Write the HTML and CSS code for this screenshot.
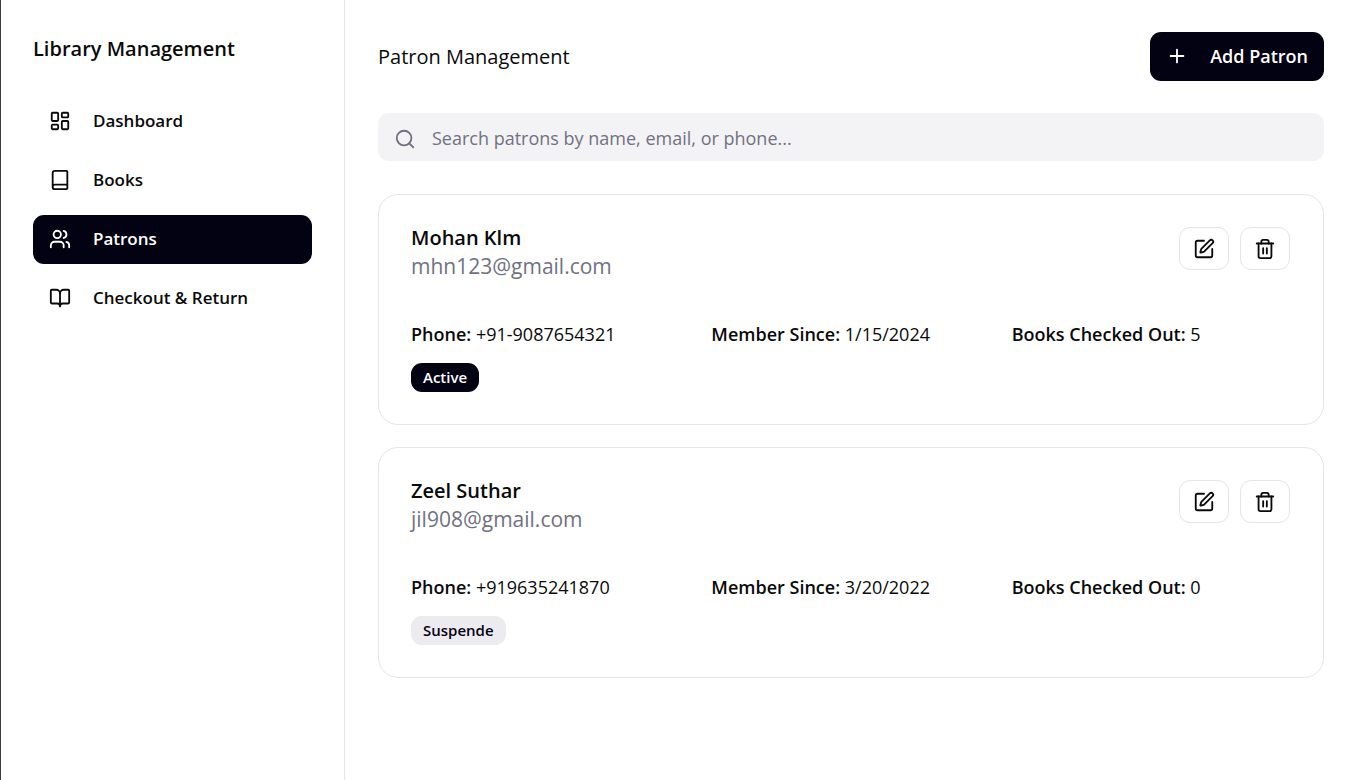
FILE: index.html
```html
<!DOCTYPE html>
<html lang="en">
<head>
<meta charset="utf-8">
<meta name="viewport" content="width=device-width, initial-scale=1">
<title>Library Management</title>
<link rel="stylesheet" href="styles.css">
</head>
<body>
<svg class="sprite" aria-hidden="true">
  <symbol id="edit" viewBox="0 0 24 24"><path d="M12 3H5a2 2 0 0 0-2 2v14a2 2 0 0 0 2 2h14a2 2 0 0 0 2-2v-7"/><path d="M18.375 2.625a1 1 0 0 1 3 3l-9.013 9.014a2 2 0 0 1-.853.505l-2.873.84a.5.5 0 0 1-.62-.62l.84-2.873a2 2 0 0 1 .506-.852z"/></symbol>
  <symbol id="trash" viewBox="0 0 24 24"><path d="M3 6h18"/><path d="M19 6v14a2 2 0 0 1-2 2H7a2 2 0 0 1-2-2V6"/><path d="M8 6V4a2 2 0 0 1 2-2h4a2 2 0 0 1 2 2v2"/><path d="M10 11v6"/><path d="M14 11v6"/></symbol>
</svg>
<div class="app">
  <aside class="sidebar">
    <h1 class="brand">Library Management</h1>
    <nav class="nav">
      <button type="button" class="nav-item">
        <svg class="icon" viewBox="0 0 24 24"><rect x="3" y="3" width="7" height="9" rx="1"/><rect x="14" y="3" width="7" height="5" rx="1"/><rect x="14" y="12" width="7" height="9" rx="1"/><rect x="3" y="16" width="7" height="5" rx="1"/></svg>
        <span>Dashboard</span>
      </button>
      <button type="button" class="nav-item">
        <svg class="icon" viewBox="0 0 24 24"><path d="M4 19.5v-15A2.5 2.5 0 0 1 6.500 2H19a1 1 0 0 1 1 1v18a1 1 0 0 1-1 1H6.500a1 1 0 0 1 0-5H20"/></svg>
        <span>Books</span>
      </button>
      <button type="button" class="nav-item active" aria-current="page">
        <svg class="icon" viewBox="0 0 24 24"><path d="M16 21v-2a4 4 0 0 0-4-4H6a4 4 0 0 0-4 4v2"/><circle cx="9" cy="7" r="4"/><path d="M22 21v-2a4 4 0 0 0-3-3.870"/><path d="M16 3.130a4 4 0 0 1 0 7.750"/></svg>
        <span>Patrons</span>
      </button>
      <button type="button" class="nav-item">
        <svg class="icon" viewBox="0 0 24 24"><path d="M12 7v14"/><path d="M3 18a1 1 0 0 1-1-1V4a1 1 0 0 1 1-1h5a4 4 0 0 1 4 4 4 4 0 0 1 4-4h5a1 1 0 0 1 1 1v13a1 1 0 0 1-1 1h-6a3 3 0 0 0-3 3 3 3 0 0 0-3-3z"/></svg>
        <span>Checkout &amp; Return</span>
      </button>
    </nav>
  </aside>
  <main class="main">
    <header class="page-head">
      <h2 class="page-title">Patron Management</h2>
      <button type="button" class="add">
        <svg class="icon" viewBox="0 0 24 24"><path d="M5 12h14"/><path d="M12 5v14"/></svg>
        <span>Add Patron</span>
      </button>
    </header>
    <label class="search">
      <svg class="icon" viewBox="0 0 24 24"><circle cx="11" cy="11" r="8"/><path d="m21 21-4.300-4.300"/></svg>
      <input type="search" aria-label="Search patrons" placeholder="Search patrons by name, email, or phone...">
    </label>
    <section class="cards">
      <article class="card">
        <div class="card-head">
          <div>
            <h3 class="name">Mohan Klm</h3>
            <p class="email">mhn123@gmail.com</p>
          </div>
          <div class="actions">
            <button type="button" class="action" aria-label="Edit Mohan Klm"><svg class="icon"><use href="#edit"/></svg></button>
            <button type="button" class="action" aria-label="Delete Mohan Klm"><svg class="icon"><use href="#trash"/></svg></button>
          </div>
        </div>
        <div class="details">
          <p><strong>Phone:</strong> +91-9087654321</p>
          <p><strong>Member Since:</strong> 1/15/2024</p>
          <p><strong>Books Checked Out:</strong> 5</p>
        </div>
        <span class="badge badge-active">Active</span>
      </article>
      <article class="card">
        <div class="card-head">
          <div>
            <h3 class="name">Zeel Suthar</h3>
            <p class="email">jil908@gmail.com</p>
          </div>
          <div class="actions">
            <button type="button" class="action" aria-label="Edit Zeel Suthar"><svg class="icon"><use href="#edit"/></svg></button>
            <button type="button" class="action" aria-label="Delete Zeel Suthar"><svg class="icon"><use href="#trash"/></svg></button>
          </div>
        </div>
        <div class="details">
          <p><strong>Phone:</strong> +919635241870</p>
          <p><strong>Member Since:</strong> 3/20/2022</p>
          <p><strong>Books Checked Out:</strong> 0</p>
        </div>
        <span class="badge">Suspende</span>
      </article>
    </section>
  </main>
</div>
</body>
</html>
```
FILE: styles.css
```css
* { box-sizing: border-box; }
body {
  margin: 0;
  background: #fff;
  color: #0a0a0a;
  font-family: "Segoe UI", "Open Sans", "Noto Sans", sans-serif;
  font-size: 18px;
  line-height: 28px;
}
h1, h2, h3, p { margin: 0; }
button, input { font: inherit; color: inherit; }
button { cursor: pointer; }
.sprite { display: none; }
.icon {
  flex: none;
  width: 22px;
  height: 22px;
  fill: none;
  stroke: currentColor;
  stroke-width: 2;
  stroke-linecap: round;
  stroke-linejoin: round;
}
.app {
  display: flex;
  min-height: 100vh;
  border-left: 1px solid #3c3c3c;
}
.sidebar {
  flex: none;
  width: 344px;
  padding: 32px;
  border-right: 1px solid #e5e5e5;
}
.brand {
  font-size: 20px;
  font-weight: 600;
  line-height: 34px;
}
.nav {
  display: flex;
  flex-direction: column;
  gap: 10px;
  margin-top: 31px;
}
.nav-item {
  display: flex;
  align-items: center;
  gap: 22px;
  height: 49px;
  padding: 0 16px 1px;
  border: 0;
  border-radius: 11px;
  background: none;
  font-size: 17px;
  font-weight: 600;
  text-align: left;
}
.nav-item.active, .add { background: #030213; color: #fff; }
.main {
  flex: 1;
  min-width: 0;
  padding: 32px 26px 32px 33px;
}
.page-head {
  display: flex;
  align-items: center;
  justify-content: space-between;
}
.page-title {
  font-size: 20px;
  font-weight: 400;
  line-height: 34px;
}
.add {
  display: flex;
  align-items: center;
  gap: 22px;
  height: 49px;
  padding: 0 16px 1px;
  border: 0;
  border-radius: 11px;
  font-weight: 600;
}
.search {
  display: flex;
  align-items: center;
  gap: 16px;
  height: 48px;
  margin-top: 32px;
  padding: 4px 16px 0;
  border-radius: 11px;
  background: #f3f3f5;
  color: #717182;
}
.search input {
  flex: 1;
  min-width: 0;
  padding: 0 0 2px;
  border: 0;
  outline: 0;
  background: none;
}
.search input::placeholder { color: #717182; opacity: 1; }
.cards {
  display: flex;
  flex-direction: column;
  gap: 22px;
  margin-top: 33px;
}
.card {
  padding: 32px 33px 32px 32px;
  border: 1px solid #e5e5e5;
  border-radius: 20px;
}
.card-head {
  display: flex;
  align-items: flex-start;
  justify-content: space-between;
}
.name {
  font-size: 20px;
  font-weight: 600;
  line-height: 22px;
}
.email {
  color: #717182;
  font-size: 21px;
  line-height: 34px;
}
.actions { display: flex; gap: 11px; }
.action {
  display: grid;
  place-items: center;
  width: 50px;
  height: 43px;
  padding: 0;
  border: 1px solid #e5e5e5;
  border-radius: 11px;
  background: #fff;
}
.details {
  display: grid;
  grid-template-columns: repeat(3, 1fr);
  gap: 22px;
  margin-top: 37px;
}
.details strong { font-weight: 600; }
.badge {
  display: block;
  width: fit-content;
  margin-top: 15px;
  padding: 3px 12px;
  border-radius: 11px;
  background: #ececf0;
  color: #030213;
  font-size: 15px;
  font-weight: 600;
  line-height: 23px;
}
.badge-active { background: #030213; color: #fff; }
```
